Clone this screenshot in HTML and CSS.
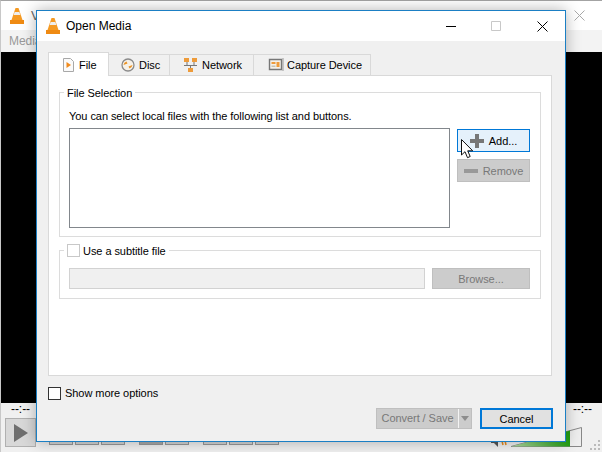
FILE: index.html
```html
<!DOCTYPE html>
<html lang="en">
<head>
<meta charset="utf-8">
<title>Open Media</title>
<link rel="stylesheet" href="styles.css">
</head>
<body>
<div class="player">
  <div class="player-title">
    <svg class="cone" viewBox="0 0 16 16"><path d="M6.500 0h3l4 12h-11z" fill="#f59a23"/><path d="M5.600 4h4.800l.9 3H4.700z" fill="#eee"/><path d="M1 12h14v4H1z" fill="#ef8a12"/></svg>
    <span class="player-name">V</span>
    <svg class="player-close" viewBox="0 0 11 11"><path d="M.5.500l10 10M10.500.500l-10 10" stroke="#a8a8a8" fill="none"/></svg>
  </div>
  <div class="player-menu">Media</div>
  <div class="video"></div>
  <div class="controls">
    <div class="timeline"><span>--:--</span><span>--:--</span></div>
    <div class="transport">
      <div class="play"><svg viewBox="0 0 14 18" width="14" height="18"><path d="M0 0l14 9L0 18z" fill="#6f6f6f"/></svg></div>
      <div class="group"><i></i><i></i><i></i></div>
      <div class="group"><i class="dark"></i><i></i></div>
      <div class="group"><i></i><i></i><i></i></div>
      <div class="volume">
        <svg class="speaker" viewBox="0 0 16 12" width="16" height="12"><path d="M0 4h3l4-4v12L3 8H0z" fill="#555"/><path d="M10 2l2 8M13 1l2 9" stroke="#e8891a" fill="none" stroke-width="1.5"/></svg>
        <svg class="wedge" viewBox="0 0 73 20" width="73" height="20"><defs><linearGradient id="g" x1="0" x2="1" y1="0" y2="0"><stop offset="0" stop-color="#b5dfa5"/><stop offset="1" stop-color="#22a012"/></linearGradient></defs><path d="M1 19.500L71.500 .5V19.500z" fill="#eee" stroke="#888"/><path d="M1 19.500L60 3.500V19.500z" fill="url(#g)"/></svg>
      </div>
    </div>
  </div>
</div>
<svg class="grip" viewBox="0 0 11 11" width="11" height="11"><path d="M8 0h2v2H8zM4 4h2v2H4zM8 4h2v2H8zM0 8h2v2H0zM4 8h2v2H4zM8 8h2v2H8z" fill="#bbb"/></svg>

<div class="dialog">
  <header class="dialog-title">
    <svg class="cone" viewBox="0 0 16 16"><path d="M6.500 0h3l4 12h-11z" fill="#f59a23"/><path d="M5.600 4h4.800l.9 3H4.700z" fill="#eee"/><path d="M1 12h14v4H1z" fill="#ef8a12"/></svg>
    <span class="dialog-name">Open Media</span>
    <div class="win-buttons">
      <svg viewBox="0 0 10 10" width="10" height="10"><path d="M0 5.500h10" stroke="#000"/></svg>
      <svg viewBox="0 0 10 10" width="10" height="10"><path d="M.5.500h9v9h-9z" stroke="#c8c8c8" fill="none"/></svg>
      <svg class="win-close" viewBox="0 0 11 11" width="11" height="11"><path d="M.5.500l10 10M10.500.500l-10 10" stroke="#000" fill="none"/></svg>
    </div>
  </header>
  <div class="dialog-body">
    <nav class="tabs">
      <div class="tab active">
        <svg viewBox="0 0 13 16" width="13" height="16"><path d="M1.500 1.500h7l3 3v10h-10z" fill="#fafafa" stroke="#a8a8a8"/><path d="M4.500 5l4.500 3-4.500 3z" fill="#f08a1c"/></svg>
        <span>File</span>
      </div>
      <div class="tab disc">
        <svg viewBox="0 0 14 14" width="14" height="14"><circle cx="7" cy="7" r="6" fill="#f6f1e8" stroke="#8a8a8a" stroke-width="1.300"/><path d="M2.500 7a4.500 4.500 0 0 1 3-3.500l1 2zM11.500 7a4.500 4.500 0 0 1-3 3.500l-1-2z" fill="#ea9326"/></svg>
        <span>Disc</span>
      </div>
      <div class="tab network">
        <svg viewBox="0 0 15 16" width="15" height="16"><path d="M4 5v3M11 5v3M1 8.500h13M7.500 8.500v3" stroke="#777" fill="none"/><path d="M1 1h5v4H1zM9 1h5v4H9zM5 11h5v4H5z" fill="#ee9b3a"/></svg>
        <span>Network</span>
      </div>
      <div class="tab capture">
        <svg viewBox="0 0 16 14" width="16" height="14"><path d="M1.500 1.500h12v10h-12z" fill="#f4f1ea" stroke="#777" stroke-width="1.400"/><path d="M3.500 4h4v2h-4zM8.500 4h3v5h-3z" fill="#ee9b3a"/><path d="M3.500 7.500h4v1.500h-4z" fill="#c9c2b0"/><path d="M15 0v13" stroke="#999"/></svg>
        <span>Capture Device</span>
      </div>
    </nav>
    <section class="pane">
      <fieldset class="box file-box">
        <legend>File Selection</legend>
        <p class="hint">You can select local files with the following list and buttons.</p>
        <div class="file-row">
          <div class="file-list"></div>
          <div class="file-actions">
            <button class="btn add" type="button"><svg viewBox="0 0 14 14" width="14" height="14"><path d="M5 0h4v5h5v4H9v5H5V9H0V5h5z" fill="#777"/></svg><span>Add...</span></button>
            <button class="btn off remove" type="button"><svg viewBox="0 0 14 4" width="14" height="4"><path d="M0 0h14v4H0z" fill="#999"/></svg><span>Remove</span></button>
          </div>
        </div>
      </fieldset>
      <fieldset class="box sub-box">
        <legend><span class="check light"></span><span>Use a subtitle file</span></legend>
        <div class="sub-row">
          <div class="sub-input"></div>
          <button class="btn off browse" type="button">Browse...</button>
        </div>
      </fieldset>
    </section>
    <label class="more"><span class="check"></span><span>Show more options</span></label>
    <footer class="actions">
      <div class="convert"><span class="convert-label">Convert / Save</span><span class="convert-arrow"><svg viewBox="0 0 8 5" width="8" height="5"><path d="M0 0h8L4 5z" fill="#8c8c8c"/></svg></span></div>
      <button class="cancel" type="button">Cancel</button>
    </footer>
  </div>
</div>

<svg class="cursor" viewBox="0 0 13 20" width="13" height="20"><path d="M.5.500v15.500l3.500-3.300 2.500 6 2.700-1.200-2.500-5.700h5z" fill="#fff" stroke="#111"/></svg>
</body>
</html>
```

FILE: styles.css
```css
* { box-sizing: border-box; }
html, body { margin: 0; padding: 0; }
body {
  width: 602px;
  height: 452px;
  overflow: hidden;
  position: relative;
  font-family: "Liberation Sans", Arial, sans-serif;
  font-size: 11px;
  letter-spacing: -0.06px;
  color: #000;
  background: #f0f0f0;
}

/* Background player window */
.player {
  width: 602px;
  height: 452px;
  display: flex;
  flex-direction: column;
  border-top: 1px solid #a3a3a3;
  border-left: 1px solid #c8c8c8;
}
.player-title {
  height: 29px;
  flex: none;
  background: #fff;
  display: flex;
  align-items: center;
  padding: 0 17px 0 8px;
  gap: 6px;
  color: #666;
  font-size: 13px;
}
.cone { width: 16px; height: 16px; flex: none; }
.player-name { flex: 1; }
.player-close { width: 11px; height: 11px; }
.player-menu {
  height: 22px;
  flex: none;
  background: #f3f3f3;
  color: #999;
  padding: 4px 0 0 8px;
  font-size: 12px;
}
.video { height: 351px; flex: none; background: #000; }
.controls { flex: 1; background: #f0f0f0; display: flex; flex-direction: column; }
.timeline {
  height: 15px;
  display: flex;
  justify-content: space-between;
  padding: 0 10px 0 10px;
  font-size: 12px;
  line-height: 13px;
}
.transport { display: flex; padding-left: 4px; }
.play {
  width: 31px;
  height: 29px;
  border: 1px solid #b0b0b0;
  background: #d8d8d8;
  display: flex;
  align-items: center;
  justify-content: center;
  margin-right: 13px;
}
.group { display: flex; gap: 2px; margin-top: 22px; margin-right: 14px; }
.group i { display: block; width: 24px; height: 5px; background: #d4d4d4; border: 1px solid #999; border-top: 0; }
.group i.dark { background: #aaa; }
.volume { margin-left: auto; margin-right: 19px; display: flex; align-items: flex-end; gap: 3px; height: 29px; }
.grip { position: absolute; right: 1px; bottom: 1px; }

/* Dialog */
.dialog {
  position: absolute;
  left: 36px;
  top: 10px;
  width: 530px;
  height: 432px;
  border: 1px solid #1b7fc4;
  background: #f0f0f0;
  box-shadow: 0 0 14px rgba(0, 0, 0, .3);
  display: flex;
  flex-direction: column;
}
.dialog-title {
  height: 30px;
  flex: none;
  background: #fff;
  display: flex;
  align-items: center;
  padding-left: 8px;
}
.dialog-name { margin-left: 5px; font-size: 12px; letter-spacing: 0; flex: 1; }
.win-buttons { display: flex; align-items: center; gap: 35px; padding-right: 17px; }
.win-close { margin-left: 1px; }
.dialog-body { flex: 1; display: flex; flex-direction: column; padding: 11px 13px 0 11px; }

/* Tabs */
.tabs { display: flex; height: 24px; align-items: flex-end; position: relative; z-index: 1; }
.tab {
  height: 22px;
  display: flex;
  align-items: center;
  background: #f0f0f0;
  border: 1px solid #d9d9d9;
  border-left: 0;
}
.tab.active {
  height: 24px;
  width: 61px;
  background: #fff;
  border-left: 1px solid #d9d9d9;
  border-bottom: 0;
  padding-left: 13px;
  gap: 4px;
}
.tab.disc { width: 61px; padding-left: 12px; gap: 4px; }
.tab.network { width: 84px; padding-left: 13px; gap: 4px; }
.tab.capture { width: 117px; padding-left: 14px; gap: 3px; }

.pane {
  height: 301px;
  margin-top: -1px;
  background: #fff;
  border: 1px solid #d9d9d9;
  padding: 7px 10px 0;
  display: flex;
  flex-direction: column;
  gap: 4px;
}
.box {
  margin: 0;
  padding: 0;
  border: 1px solid #dcdcdc;
  min-width: 0;
}
.box legend { padding: 2px 3px 0; margin-left: -5px; line-height: 16px; display: flex; align-items: center; gap: 3px; }
.file-box { height: 154px; padding: 7px 10px 0 9px; }
.hint { margin: 0 0 4px; line-height: 16px; }
.file-row { display: flex; gap: 7px; align-items: flex-start; }
.file-list { width: 381px; height: 100px; border: 1px solid #82878c; background: #fff; }
.file-actions { margin-top: 1px; display: flex; flex-direction: column; gap: 7px; }
.btn {
  font: inherit;
  letter-spacing: inherit;
  width: 73px;
  height: 23px;
  padding: 0;
  display: flex;
  align-items: center;
  justify-content: center;
  gap: 5px;
  background: #e5f1fb;
  border: 1px solid #0078d7;
  color: #000;
}
.btn.off { background: #ccc; border-color: #bfbfbf; color: #787878; }
.btn.browse { width: 98px; height: 21px; }
.sub-box { height: 58px; padding: 9px 10px 0 9px; }
.sub-row { display: flex; justify-content: space-between; }
.sub-input { width: 356px; height: 21px; background: #f0f0f0; border: 1px solid #d2d2d2; }
.check { display: block; width: 13px; height: 13px; background: #fff; border: 1px solid #333; flex: none; }
.check.light { border-color: #c8c8c8; margin-top: -2px; }
.more { display: flex; align-items: center; gap: 4px; margin-top: 9px; height: 16px; }
.actions { display: flex; justify-content: flex-end; gap: 8px; margin: 6px -1px 0 0; }
.convert {
  width: 96px;
  height: 21px;
  display: flex;
  background: #ccc;
  border: 1px solid #bfbfbf;
  color: #787878;
  margin-top: 1px;
}
.convert-label { flex: 1; text-align: center; line-height: 19px; }
.convert-arrow { width: 13px; border-left: 1px solid #f4f4f4; display: flex; align-items: center; justify-content: center; }
.cancel {
  font: inherit;
  letter-spacing: inherit;
  width: 73px;
  height: 21px;
  margin-top: 1px;
  padding: 0;
  background: #e1e1e1;
  border: 2px solid #0078d7;
}

.cursor { position: absolute; left: 461px; top: 139px; }
```
